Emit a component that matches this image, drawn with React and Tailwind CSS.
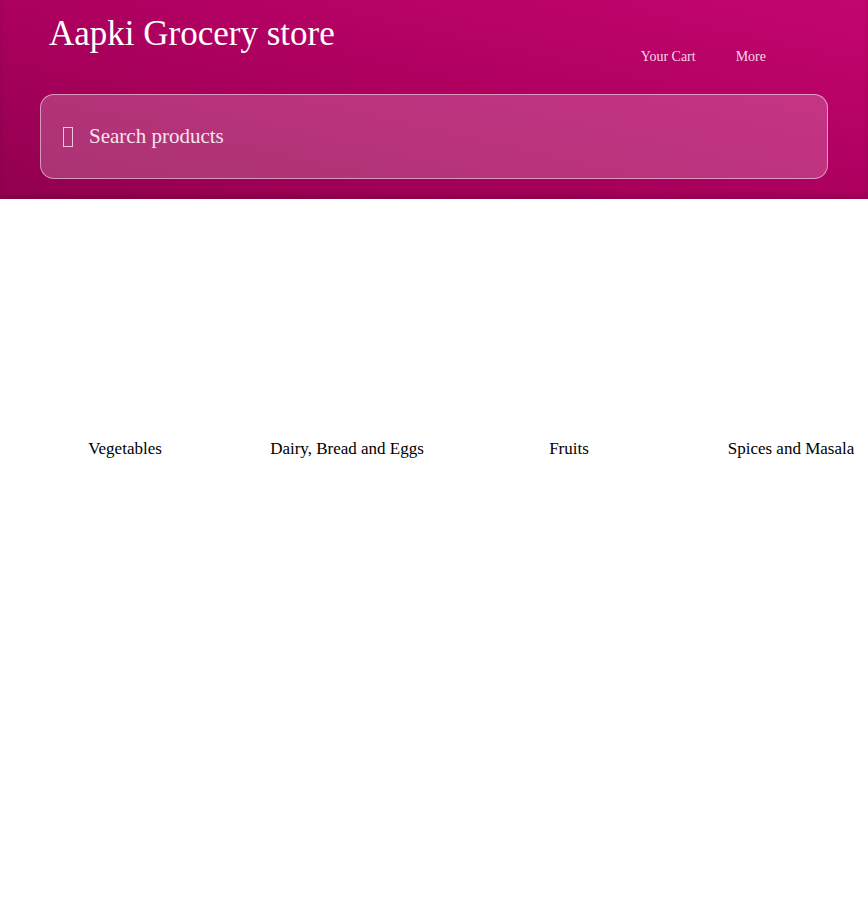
import React from 'react'

const categories = ['Vegetables', 'Dairy, Bread and Eggs', 'Fruits', 'Spices and Masala']

function Header() {
  return (
    <header className="h-[199px] bg-gradient-to-tr from-[#92004f] via-[#ad005f] to-[#c4066f] shadow-[inset_0_-4px_4px_rgba(90,0,40,0.25)] px-[40px]">
      <div className="flex items-start justify-between">
        <h1 className="pl-[9px] pt-[14px] text-[35px] leading-[40px] text-white">Aapki Grocery store</h1>
        <nav className="flex gap-[40px] pt-[48px] pr-[62px] text-[14px] leading-[18px] text-[#f4d6e6]">
          <a href="#">Your Cart</a>
          <a href="#">More</a>
        </nav>
      </div>
      <div className="mt-[28px] flex h-[85px] items-center rounded-[14px] border border-white/50 bg-white/20 pl-[22px]">
        <span className="mr-[16px] inline-block h-[20px] w-[10px] border-[1.5px] border-[#f3c6dc]"></span>
        <input
          type="text"
          placeholder="Search products"
          className="flex-1 bg-transparent text-[21px] text-white outline-none placeholder:text-[#f6e4ee]"
        />
      </div>
    </header>
  )
}

export default function App() {
  return (
    <div className="min-h-screen overflow-hidden bg-white font-['Liberation_Serif',serif]">
      <Header />
      <div className="flex gap-[22px] px-[25px] pt-[240px]">
        {categories.map((c) => (
          <div key={c} className="w-[200px] shrink-0 text-center">
            <p className="whitespace-nowrap text-[17px] leading-[19px] text-black">{c}</p>
          </div>
        ))}
      </div>
    </div>
  )
}
